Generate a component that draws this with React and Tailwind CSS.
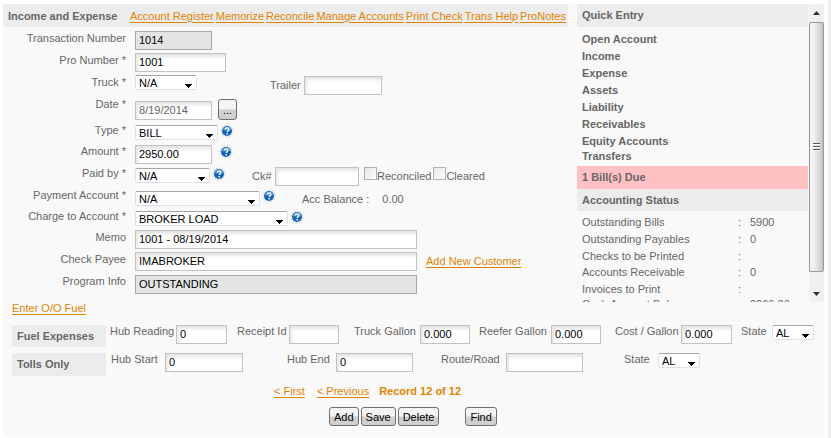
import clsx from 'clsx';

const headerLinks = ['Account Register', 'Memorize', 'Reconcile', 'Manage Accounts', 'Print Check', 'Trans Help', 'ProNotes'];
const quickEntries = ['Open Account', 'Income', 'Expense', 'Assets', 'Liability', 'Receivables', 'Equity Accounts'];
const statusRows = [
  ['Outstanding Bills', '5900'],
  ['Outstanding Payables', '0'],
  ['Checks to be Printed', ''],
  ['Accounts Receivable', '0'],
  ['Invoices to Print', ''],
  ['Cash Account Balance', '2266.36'],
];

function TextInput({ className, readOnly, color = 'text-black', ...props }) {
  return (
    <input
      type="text"
      readOnly={readOnly}
      className={clsx(
        color,
        'block h-[19px] shrink-0 border pb-0.5 pl-[3px] pr-0.5 leading-4 outline-none',
        readOnly ? 'border-[#a8a8a8] bg-[#e4e4e4]' : 'border-[#c2c2c2] bg-white shadow-[inset_2px_3px_3px_#e6e6e6]',
        className
      )}
      {...props}
    />
  );
}

function Select({ id, value, className }) {
  return (
    <span className={clsx('relative block h-[15px] shrink-0', className)}>
      <select
        id={id}
        defaultValue={value}
        className="block h-full w-full appearance-none rounded-[2px] border border-[#dde0ea] border-t-[#a5a5a5] bg-white pl-[3px] leading-3 text-black"
      >
        <option>{value}</option>
      </select>
      <svg className="pointer-events-none absolute bottom-0.5 right-[5px]" width="7" height="4" viewBox="0 0 7 4" shapeRendering="crispEdges">
        <path d="M0 0h7v1H6v1H5v1H4v1H3V3H2V2H1V1H0z" fill="#000" />
      </svg>
    </span>
  );
}

function Help({ className }) {
  return (
    <button type="button" aria-label="Help" className={clsx('flex h-[17px] w-3 shrink-0 items-center', className)}>
      <svg width="12" height="12" viewBox="0 0 12 12" overflow="visible">
        <circle cx="6" cy="6" r="6" fill="none" stroke="#b4bac2" strokeDasharray="1.200 1.900" />
        <circle cx="6" cy="6" r="5" fill="#1663b8" />
        <path d="M1.800 5.500a4.300 4.300 0 0 1 8.400-.8C8 6.500 4 4.500 1.800 5.500z" fill="#4f9ade" />
        <path d="M4.300 4.500c0-2.200 3.500-2.200 3.500 0C7.800 5.700 6.200 5.700 6.200 7" fill="none" stroke="#fff" strokeWidth="1.400" />
        <rect x="5.500" y="8" width="1.500" height="1.400" fill="#fff" />
      </svg>
    </button>
  );
}

function Row({ label, htmlFor, height = 'h-[22px]', children }) {
  return (
    <div className={clsx('flex items-start', height)}>
      <label htmlFor={htmlFor} className="mr-[9px] w-[123px] shrink-0 text-right">{label}</label>
      {children}
    </div>
  );
}

function Link({ children, className }) {
  return <a href="#" className={clsx('whitespace-nowrap text-[#e08300] underline underline-offset-2', className)}>{children}</a>;
}

function Button({ children, className = 'h-[19px] px-1' }) {
  return (
    <button
      type="button"
      className={clsx('rounded-[3px] border border-[#707070] bg-linear-to-b from-[#f4f4f4] from-45% to-[#d0d0d0] to-55% leading-4 text-black', className)}
    >
      {children}
    </button>
  );
}

function Field({ id, label, labelClass, children }) {
  return (
    <div className="flex shrink-0 items-start">
      <label htmlFor={id} className={clsx('-mt-0.5 shrink-0 whitespace-nowrap', labelClass)}>{label}</label>
      {children}
    </div>
  );
}

function Check({ id, label }) {
  return (
    <span className="flex items-start">
      <input
        id={id}
        type="checkbox"
        className="size-[13px] appearance-none border border-[#b0b0b0] bg-linear-to-br from-[#e6e6e6] to-white checked:bg-[#1b6dc1]"
      />
      <label htmlFor={id} className="mt-px">{label}</label>
    </span>
  );
}

function TransactionForm() {
  return (
    <div className="pt-[3px]">
      <Row label="Transaction Number" htmlFor="trans">
        <TextInput id="trans" readOnly defaultValue="1014" className="mt-px w-[77px]" />
      </Row>
      <Row label="Pro Number *" htmlFor="pro">
        <TextInput id="pro" defaultValue="1001" className="mt-px w-[91px]" />
      </Row>
      <Row label="Truck *" htmlFor="truck">
        <Select id="truck" value="N/A" className="mt-px w-[62px]" />
        <label htmlFor="trailer" className="ml-[73px] mt-[3px] w-[34px]">Trailer</label>
        <TextInput id="trailer" className="mt-0.5 w-[78px]" />
      </Row>
      <Row label="Date *" htmlFor="date" height="h-[26px]">
        <TextInput id="date" defaultValue="8/19/2014" color="text-[#666]" className="mt-[5px] w-[77px]" />
        <Button className="ml-1.5 mt-[3px] h-[21px] w-[19px]">...</Button>
      </Row>
      <Row label="Type *" htmlFor="type" height="h-[21px]">
        <Select id="type" value="BILL" className="mt-[3px] w-[83px]" />
        <Help className="ml-[3px]" />
      </Row>
      <Row label="Amount *" htmlFor="amount">
        <TextInput id="amount" defaultValue="2950.00" className="mt-0.5 w-[77px]" />
        <Help className="ml-2" />
      </Row>
      <Row label="Paid by *" htmlFor="paid">
        <Select id="paid" value="N/A" className="mt-[3px] w-[75px]" />
        <Help className="ml-[3px]" />
        <label htmlFor="ck" className="ml-[27px] mt-[3px] w-[23px]">Ck#</label>
        <TextInput id="ck" className="mt-0.5 w-[84px]" />
        <div className="ml-[5px] mt-0.5 flex gap-0.5">
          <Check id="reconciled" label="Reconciled" />
          <Check id="cleared" label="Cleared" />
        </div>
      </Row>
      <Row label="Payment Account *" htmlFor="payment" height="h-[21px]">
        <Select id="payment" value="N/A" className="mt-1 w-[125px]" />
        <Help className="ml-[3px]" />
        <span className="ml-[27px] mt-1">Acc Balance :</span>
        <span className="ml-[13px] mt-1">0.00</span>
      </Row>
      <Row label="Charge to Account *" htmlFor="charge" height="h-[21px]">
        <Select id="charge" value="BROKER LOAD" className="mt-[3px] w-[153px]" />
        <Help className="ml-[3px]" />
      </Row>
      <Row label="Memo" htmlFor="memo">
        <TextInput id="memo" defaultValue="1001 - 08/19/2014" className="mt-px w-[282px]" />
      </Row>
      <Row label="Check Payee" htmlFor="payee">
        <TextInput id="payee" defaultValue="IMABROKER" className="mt-px w-[282px]" />
        <Link className="ml-[9px] mt-0.5">Add New Customer</Link>
      </Row>
      <Row label="Program Info" htmlFor="program">
        <TextInput id="program" readOnly defaultValue="OUTSTANDING" className="mt-0.5 w-[282px]" />
      </Row>
    </div>
  );
}

function SidePanel() {
  return (
    <aside className="flex h-[298px] w-[247px] shrink-0">
      <div className="flex-1 overflow-hidden">
        <h2 className="h-[23px] bg-[#ececec] pl-[5px] font-bold leading-[23px]">Quick Entry</h2>
        <ul className="pb-1 pl-[5px] pt-1 font-bold leading-[17px]">
          {quickEntries.map((entry) => <li key={entry}>{entry}</li>)}
          <li className="leading-3">Transfers</li>
        </ul>
        <div className="h-[23px] bg-[#ffc1c4] pl-[5px] font-bold leading-[23px]">1 Bill(s) Due</div>
        <h2 className="mb-[3px] h-[22px] bg-[#ececec] pl-[5px] font-bold leading-[23px]">Accounting Status</h2>
        <table className="w-full table-fixed leading-[17px]">
          <tbody>
            {statusRows.map(([name, value], i) => (
              <tr key={name} className={clsx(i === 2 && 'leading-4', i === 5 && 'leading-3')}>
                <td className="w-[161px] pl-[5px]">{name}</td>
                <td className="w-3">:</td>
                <td>{value}</td>
              </tr>
            ))}
          </tbody>
        </table>
      </div>
      <div className="ml-px flex w-[15px] flex-col bg-[#f0f0f0]">
        <button type="button" aria-label="Scroll up" className="flex h-[18px] items-center justify-center">
          <svg width="7" height="4" viewBox="0 0 7 4"><path d="M0 4 3.500 0 7 4z" fill="#333" /></svg>
        </button>
        <div className="flex h-[250px] items-center justify-center rounded-[2px] border border-[#979797] bg-linear-to-r from-[#f3f3f3] from-30% to-[#c4c4c8]">
          <svg width="7" height="8" viewBox="0 0 7 8" shapeRendering="crispEdges">
            <path d="M0 .5h7M0 3.500h7M0 6.500h7" stroke="#555" />
            <path d="M0 1.500h7M0 4.500h7M0 7.500h7" stroke="#fff" />
          </svg>
        </div>
        <button type="button" aria-label="Scroll down" className="flex flex-1 items-center justify-center pt-3.5">
          <svg width="7" height="4" viewBox="0 0 7 4"><path d="M0 0h7L3.500 4z" fill="#333" /></svg>
        </button>
      </div>
    </aside>
  );
}

function ExpenseRows() {
  return (
    <div className="space-y-1.5 pl-[9px] pt-[9px]">
      <div className="flex items-start">
        <h3 className="mr-1 h-[22px] w-[94px] shrink-0 bg-[#ececec] pl-[5px] font-bold leading-[23px]">Fuel Expenses</h3>
        <Field id="hubReading" label="Hub Reading" labelClass="w-[66px]">
          <TextInput id="hubReading" defaultValue="0" className="w-[51px]" />
        </Field>
        <Field id="receipt" label="Receipt Id" labelClass="ml-2.5 w-[52px]">
          <TextInput id="receipt" className="w-[50px]" />
        </Field>
        <Field id="truckGallon" label="Truck Gallon" labelClass="ml-[15px] w-[66px]">
          <TextInput id="truckGallon" defaultValue="0.000" className="w-[50px]" />
        </Field>
        <Field id="reeferGallon" label="Reefer Gallon" labelClass="ml-[9px] w-[72px]">
          <TextInput id="reeferGallon" defaultValue="0.000" className="w-[50px]" />
        </Field>
        <Field id="cost" label="Cost / Gallon" labelClass="ml-3.5 w-[66px]">
          <TextInput id="cost" defaultValue="0.000" className="w-[51px]" />
        </Field>
        <Field id="fuelState" label="State" labelClass="ml-[9px] w-[31px]">
          <Select id="fuelState" value="AL" className="w-[42px]" />
        </Field>
      </div>
      <div className="flex items-start">
        <h3 className="mr-[5px] h-[23px] w-[94px] shrink-0 bg-[#ececec] pl-[5px] font-bold leading-[23px]">Tolls Only</h3>
        <Field id="hubStart" label="Hub Start" labelClass="w-[54px]">
          <TextInput id="hubStart" defaultValue="0" className="w-[78px]" />
        </Field>
        <Field id="hubEnd" label="Hub End" labelClass="ml-11 w-[49px]">
          <TextInput id="hubEnd" defaultValue="0" className="w-[77px]" />
        </Field>
        <Field id="route" label="Route/Road" labelClass="ml-7 w-[65px]">
          <TextInput id="route" className="w-[77px]" />
        </Field>
        <Field id="tollState" label="State" labelClass="ml-[41px] w-[34px]">
          <Select id="tollState" value="AL" className="w-[42px]" />
        </Field>
      </div>
    </div>
  );
}

export default function App() {
  return (
    <div className="min-h-screen border-r-[3px] border-[#efefef] bg-white pb-px pl-[3px] pr-1 pt-1 font-['Liberation_Sans',sans-serif] text-[11px] leading-4 text-[#666]">
      <div className="bg-[#f9f9f9] pb-[11px]">
        <div className="flex">
          <main className="mr-[9px] min-w-0 flex-1">
            <header className="flex h-[23px] items-center bg-[#ececec] pl-[5px]">
              <h1 className="w-[122px] shrink-0 whitespace-nowrap font-bold">Income and Expense</h1>
              <nav className="flex gap-0.5">
                {headerLinks.map((link) => <Link key={link}>{link}</Link>)}
              </nav>
            </header>
            <TransactionForm />
          </main>
          <SidePanel />
        </div>
        <div className="-mt-0.5 pl-[9px]"><Link>Enter O/O Fuel</Link></div>
        <ExpenseRows />
        <div className="mt-[7px] flex pl-[271px]">
          <Link>&lt; First</Link>
          <Link className="ml-3">&lt; Previous</Link>
          <span className="ml-2.5 font-bold text-[#e08300]">Record 12 of 12</span>
        </div>
        <div className="mt-2 flex gap-0.5 pl-[326px]">
          <Button>Add</Button>
          <Button>Save</Button>
          <Button>Delete</Button>
          <Button className="ml-6 h-[19px] px-1">Find</Button>
        </div>
      </div>
    </div>
  );
}
